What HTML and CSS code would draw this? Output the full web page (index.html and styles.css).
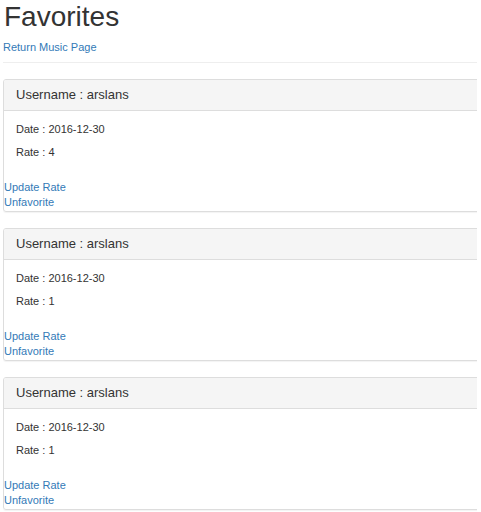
FILE: index.html
```html
<!DOCTYPE html>
<html>
<head>
<meta charset="utf-8">
<title>Favorites</title>
<link rel="stylesheet" href="styles.css">
</head>
<body>
<div class="page">
  <h1 class="title">Favorites</h1>
  <a class="back" href="#">Return Music Page</a>
  <hr class="rule">
  <div class="panel">
    <div class="panel-heading">Username : arslans</div>
    <div class="panel-body">
      <p class="line">Date : 2016-12-30</p>
      <p class="line">Rate : 4</p>
    </div>
    <div class="actions">
      <a href="#">Update Rate</a>
      <a href="#">Unfavorite</a>
    </div>
  </div>
  <div class="panel">
    <div class="panel-heading">Username : arslans</div>
    <div class="panel-body">
      <p class="line">Date : 2016-12-30</p>
      <p class="line">Rate : 1</p>
    </div>
    <div class="actions">
      <a href="#">Update Rate</a>
      <a href="#">Unfavorite</a>
    </div>
  </div>
  <div class="panel">
    <div class="panel-heading">Username : arslans</div>
    <div class="panel-body">
      <p class="line">Date : 2016-12-30</p>
      <p class="line">Rate : 1</p>
    </div>
    <div class="actions">
      <a href="#">Update Rate</a>
      <a href="#">Unfavorite</a>
    </div>
  </div>
</div>
</body>
</html>
```
FILE: styles.css
```css
html, body {
  margin: 0;
  padding: 0;
  background: #fff;
}
body {
  font-family: "Liberation Sans", Arial, sans-serif;
  font-size: 11px;
  color: #333;
}
.page {
  margin: 0 4px 0 3px;
  overflow: hidden;
}
a {
  color: #337ab7;
  text-decoration: none;
}
.title {
  margin: 1px 0 0 0;
  padding-left: 1px;
  font-size: 28px;
  font-weight: 500;
  line-height: 32px;
}
.back {
  display: block;
  margin-top: 7px;
  line-height: 15px;
  font-size: 11px;
}
.rule {
  margin: 7px 0 16px 0;
  border: 0;
  border-top: 1px solid #eee;
  height: 0;
}
.panel {
  border: 1px solid #ddd;
  border-radius: 3px;
  margin-right: -3px;
  margin-bottom: 16px;
  box-shadow: 0 1px 1px rgba(0,0,0,0.05);
}
.panel-heading {
  background: #f5f5f5;
  border-bottom: 1px solid #ddd;
  padding: 7px 12px;
  font-size: 13px;
  line-height: 16px;
  border-radius: 2px 2px 0 0;
}
.panel-body {
  padding: 10px 12px 19px;
}
.line {
  margin: 0 0 6px 0;
  font-size: 11px;
  line-height: 17px;
}
.line:last-child {
  margin-bottom: 0;
}
.actions {
  display: flex;
  flex-direction: column;
  align-items: flex-start;
  padding-bottom: 1px;
}
.actions a {
  font-size: 11px;
  line-height: 15px;
}
```
